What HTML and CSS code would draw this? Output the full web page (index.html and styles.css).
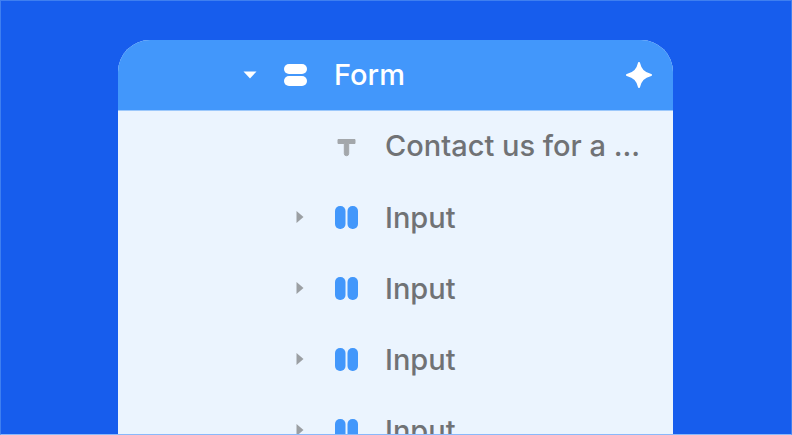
FILE: index.html
```html
<!DOCTYPE html>
<html lang="en">
<head>
    <meta charset="UTF-8">
    <meta name="viewport" content="width=device-width, initial-scale=1.0">
    <title>Form layers</title>
    <link rel="stylesheet" href="styles.css">
</head>
<body>
    <div class="stage">
        <div class="panel">
            <div class="head">
                <svg class="caret" width="14" height="8" viewBox="0 0 14 8"><path d="M0.500 0.500h13L7 7.500z" fill="#fff"/></svg>
                <svg class="stack" width="23" height="22" viewBox="0 0 23 22">
                    <rect y="0" width="23" height="10" rx="5" fill="#fff"/>
                    <rect y="12" width="23" height="10" rx="5" fill="#fff"/>
                </svg>
                <span class="head-title">Form</span>
                <svg class="spark" width="26" height="26" viewBox="0 0 26 26"><path d="M13 1c1.500 6.500 4.500 10 12 12c-7.500 2-10.500 5.500-12 12c-1.500-6.500-4.500-10-12-12c7.500-2 10.500-5.500 12-12z" fill="#fff" stroke="#fff" stroke-width="2" stroke-linejoin="round"/></svg>
            </div>
            <div class="row row-text">
                <span class="arrow-slot"></span>
                <svg class="type" width="23" height="24" viewBox="0 0 23 24"><path d="M3 4.500h17v4h-6.300v10a2.200 2.200 0 0 1-4.400 0v-10H3z" fill="#a3a7ab" stroke="#a3a7ab" stroke-width="1" stroke-linejoin="round"/></svg>
                <span class="label">Contact us for a ...</span>
            </div>
            <div class="row">
                <svg class="arrow" width="8" height="14" viewBox="0 0 8 14"><path d="M0.500 1l7 6-7 6z" fill="#9b9fa3"/></svg>
                <svg class="cols" width="23" height="23" viewBox="0 0 23 23">
                    <rect x="0" y="0" width="10.500" height="23" rx="5" fill="#4297fb"/>
                    <rect x="12.500" y="0" width="10.500" height="23" rx="5" fill="#4297fb"/>
                </svg>
                <span class="label">Input</span>
            </div>
            <div class="row">
                <svg class="arrow" width="8" height="14" viewBox="0 0 8 14"><path d="M0.500 1l7 6-7 6z" fill="#9b9fa3"/></svg>
                <svg class="cols" width="23" height="23" viewBox="0 0 23 23">
                    <rect x="0" y="0" width="10.500" height="23" rx="5" fill="#4297fb"/>
                    <rect x="12.500" y="0" width="10.500" height="23" rx="5" fill="#4297fb"/>
                </svg>
                <span class="label">Input</span>
            </div>
            <div class="row">
                <svg class="arrow" width="8" height="14" viewBox="0 0 8 14"><path d="M0.500 1l7 6-7 6z" fill="#9b9fa3"/></svg>
                <svg class="cols" width="23" height="23" viewBox="0 0 23 23">
                    <rect x="0" y="0" width="10.500" height="23" rx="5" fill="#4297fb"/>
                    <rect x="12.500" y="0" width="10.500" height="23" rx="5" fill="#4297fb"/>
                </svg>
                <span class="label">Input</span>
            </div>
            <div class="row">
                <svg class="arrow" width="8" height="14" viewBox="0 0 8 14"><path d="M0.500 1l7 6-7 6z" fill="#9b9fa3"/></svg>
                <svg class="cols" width="23" height="23" viewBox="0 0 23 23">
                    <rect x="0" y="0" width="10.500" height="23" rx="5" fill="#4297fb"/>
                    <rect x="12.500" y="0" width="10.500" height="23" rx="5" fill="#4297fb"/>
                </svg>
                <span class="label">Input</span>
            </div>
        </div>
    </div>
</body>
</html>
```

FILE: styles.css
```css
html, body {
    margin: 0;
    height: 100%;
    overflow: hidden;
}
body {
    font-family: Inter, "Liberation Sans", sans-serif;
}
.stage {
    box-sizing: border-box;
    width: 792px;
    height: 435px;
    padding: 39px 118px 0 117px;
    background: #175ded;
    border: 1px solid #3f7ff0;
    border-bottom-color: #8ab8fb;
    overflow: hidden;
}
.panel {
    height: 394px;
    background: #ebf4fe;
    border-radius: 32px 32px 0 0;
    overflow: hidden;
}
.head {
    display: flex;
    align-items: center;
    height: 71px;
    padding: 0 21px 1px 125px;
    background: #4297fb;
    border-bottom: 1px solid #9cc8fb;
    box-sizing: border-box;
    color: #fff;
}
.caret {
    margin-right: 27px;
}
.stack {
    margin-right: 27px;
}
.head-title {
    font-size: 29px;
    font-weight: 500;
    flex: 1;
}
.row {
    display: flex;
    align-items: center;
    height: 71px;
    padding-left: 178px;
}
.arrow, .arrow-slot {
    width: 8px;
    margin-right: 31px;
    margin-top: -2px;
    flex: none;
}
.type, .cols {
    margin-right: 27px;
    flex: none;
}
.label {
    font-size: 29px;
    font-weight: 500;
    color: #707275;
    white-space: nowrap;
}
.row-text .label {
    margin-bottom: 2px;
}
```
